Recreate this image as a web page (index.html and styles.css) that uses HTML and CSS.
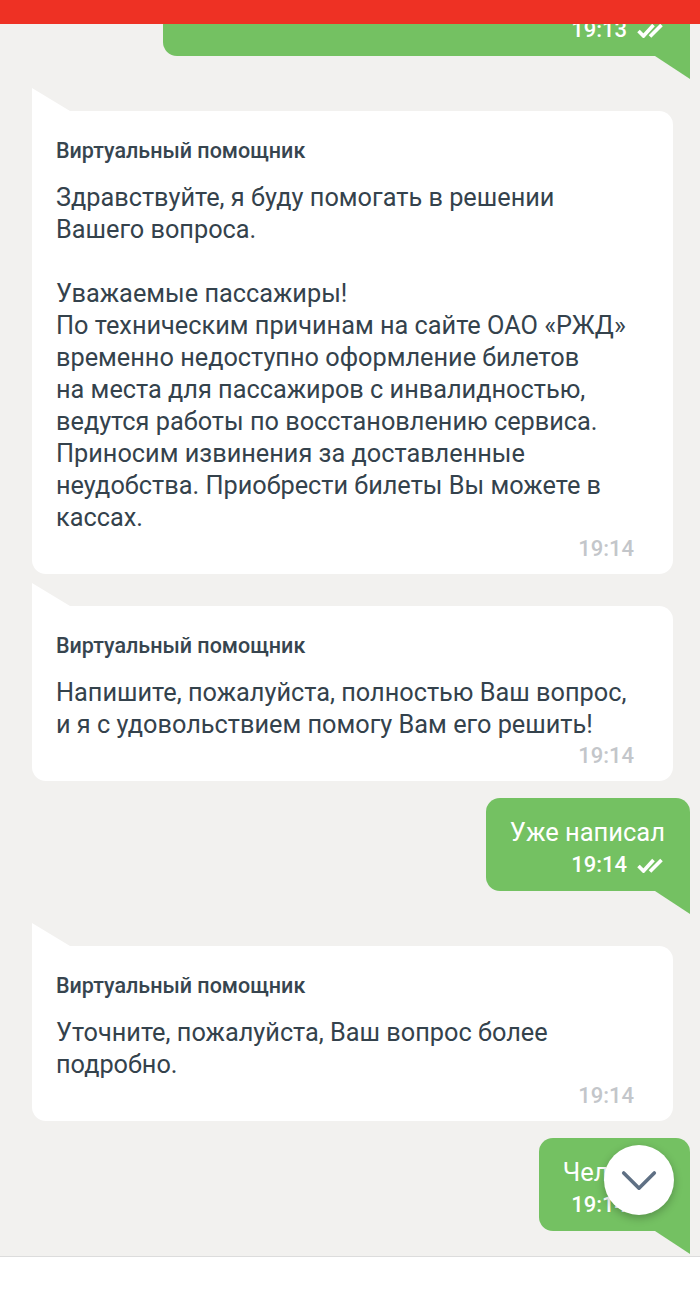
FILE: index.html
```html
<!DOCTYPE html>
<html lang="ru">
<head>
<meta charset="utf-8">
<link rel="stylesheet" href="styles.css">
</head>
<body>
<div class="screen">
  <div class="statusbar"></div>
  <div class="chat">
    <div class="msg user first">
      <div class="meta"><span class="time">19:13</span><svg class="checks" viewBox="0 0 27 15"><path d="M1.5 8 L6.5 13 L16.5 2 M13 13.5 L24.5 2" fill="none" stroke="#fff" stroke-width="3.6" stroke-linecap="butt"/></svg></div>
    </div>

    <div class="msg bot">
      <div class="name">Виртуальный помощник</div>
      <div class="text">Здравствуйте, я буду помогать в решении<br>Вашего вопроса.<br><br>Уважаемые пассажиры!<br>По техническим причинам на сайте ОАО «РЖД»<br>временно недоступно оформление билетов<br>на места для пассажиров с инвалидностью,<br>ведутся работы по восстановлению сервиса.<br>Приносим извинения за доставленные<br>неудобства. Приобрести билеты Вы можете в<br>кассах.</div>
      <div class="stamp">19:14</div>
    </div>

    <div class="msg bot">
      <div class="name">Виртуальный помощник</div>
      <div class="text">Напишите, пожалуйста, полностью Ваш вопрос,<br>и я с удовольствием помогу Вам его решить!</div>
      <div class="stamp">19:14</div>
    </div>

    <div class="msg user">
      <div class="utext">Уже написал</div>
      <div class="meta"><span class="time">19:14</span><svg class="checks" viewBox="0 0 27 15"><path d="M1.5 8 L6.5 13 L16.5 2 M13 13.5 L24.5 2" fill="none" stroke="#fff" stroke-width="3.6" stroke-linecap="butt"/></svg></div>
    </div>

    <div class="msg bot">
      <div class="name">Виртуальный помощник</div>
      <div class="text">Уточните, пожалуйста, Ваш вопрос более<br>подробно.</div>
      <div class="stamp">19:14</div>
    </div>

    <div class="msg user">
      <div class="utext">Человек</div>
      <div class="meta"><span class="time">19:14</span><svg class="checks" viewBox="0 0 27 15"><path d="M1.5 8 L6.5 13 L16.5 2 M13 13.5 L24.5 2" fill="none" stroke="#fff" stroke-width="3.6" stroke-linecap="butt"/></svg></div>
    </div>
  </div>
  <div class="inputbar"></div>
  <button class="scroll-down" aria-label="Вниз">
    <svg viewBox="0 0 40 24" width="36" height="22"><path d="M3 3 L20 20 L37 3" fill="none" stroke="#5f7084" stroke-width="4" stroke-linecap="round" stroke-linejoin="round"/></svg>
  </button>
</div>
</body>
</html>
```

FILE: styles.css
```css
html, body {
  margin: 0;
  padding: 0;
}
body {
  background: #f2f1ef;
  font-family: Roboto, "Noto Sans", sans-serif;
}
.screen {
  position: relative;
  width: 700px;
  height: 1294px;
  overflow: hidden;
  display: flex;
  flex-direction: column;
}
.statusbar {
  height: 24px;
  background: #ee3124;
  flex: none;
  position: relative;
  z-index: 2;
}
.chat {
  flex: 1;
  overflow: hidden;
  display: flex;
  flex-direction: column;
}
.msg {
  position: relative;
  flex: none;
}
.msg.user {
  align-self: flex-end;
  margin-right: 10px;
  margin-top: 17px;
  background: #74c162;
  color: #fff;
  border-radius: 14px 14px 0 14px;
  padding: 18px 25px 14px 24px;
  text-align: right;
  margin-bottom: 23px;
}
.msg.user::after {
  content: "";
  position: absolute;
  right: 0;
  bottom: -23px;
  width: 35px;
  height: 23px;
  background: #74c162;
  clip-path: polygon(0 0, 100% 0, 100% 100%);
}
.msg.user.first {
  margin-top: -51px;
  width: 478px;
  padding-top: 40px;
}
.utext {
  font-size: 25.5px;
  line-height: 32px;
}
.meta {
  display: flex;
  justify-content: flex-end;
  align-items: center;
  gap: 10px;
  margin-top: 5px;
  height: 24px;
}
.time {
  font-size: 22px;
  line-height: 24px;
  font-weight: 500;
}
.checks {
  width: 27px;
  height: 15px;
  margin-right: 1px;
}
.msg.bot {
  align-self: flex-start;
  margin-left: 32px;
  width: 641px;
  box-sizing: border-box;
  background: #fff;
  border-radius: 0 14px 14px 14px;
  padding: 28px 39px 13px 24px;
  margin-top: 32px;
  color: #34424c;
}
.msg.bot::before {
  content: "";
  position: absolute;
  left: 0;
  top: -23px;
  width: 38px;
  height: 23px;
  background: #fff;
  clip-path: polygon(0 0, 0 100%, 100% 100%);
}
.name {
  font-size: 21.5px;
  line-height: 24px;
  font-weight: 500;
  color: #37454f;
}
.text {
  margin-top: 19px;
  font-size: 25.3px;
  line-height: 32px;
}
.stamp {
  margin-top: 3px;
  text-align: right;
  font-size: 22px;
  line-height: 24px;
  font-weight: 500;
  color: #c3c6ca;
}
.inputbar {
  flex: none;
  height: 37px;
  background: #fff;
  border-top: 1px solid #dcdcdc;
}
.scroll-down {
  position: absolute;
  left: 604px;
  top: 1145px;
  width: 70px;
  height: 70px;
  border-radius: 50%;
  border: none;
  background: #fff;
  box-shadow: 0 3px 8px rgba(0, 0, 0, 0.25);
  display: flex;
  align-items: center;
  justify-content: center;
  padding: 0;
  padding-top: 2px;
}
```
